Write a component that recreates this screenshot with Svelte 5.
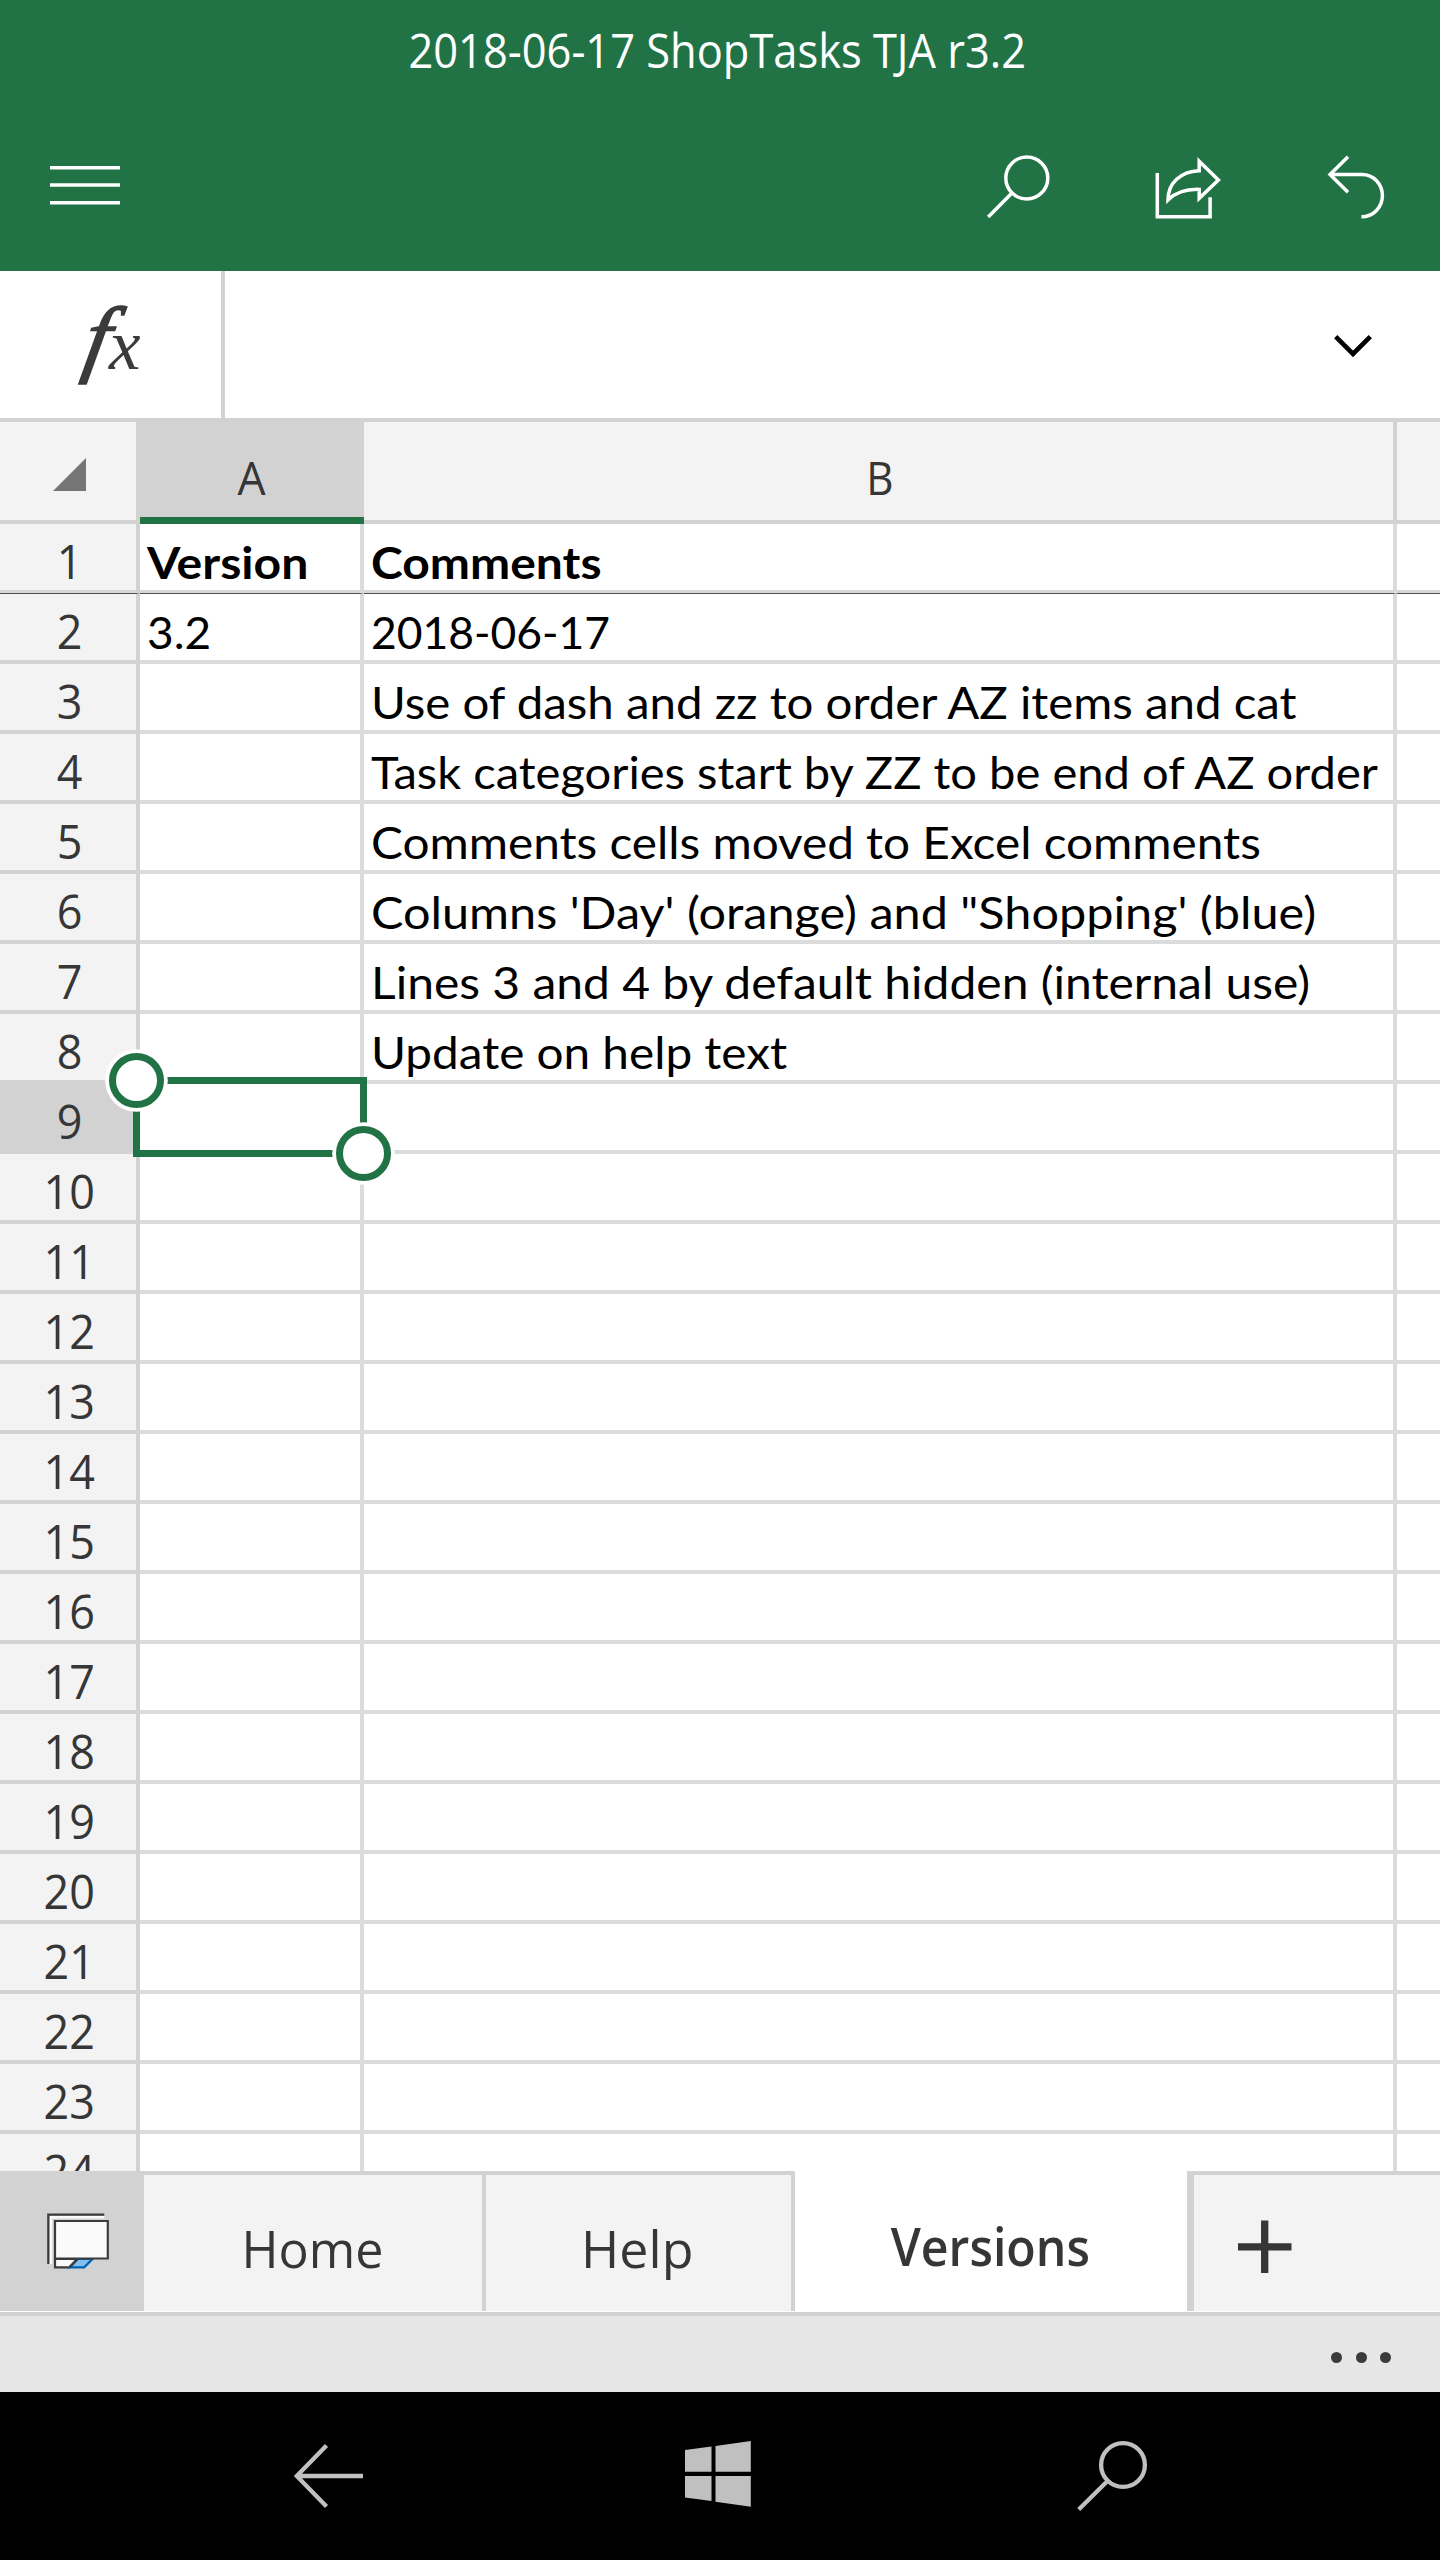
<script>
  const cells = {
    1: { a: ['Version', 160.5], b: ['Comments', 228], bold: true },
    2: { a: ['3.2', 61.5], b: ['2018-06-17', 235.5] },
    3: { b: ['Use of dash and zz to order AZ items and cat', 926] },
    4: { b: ['Task categories start by ZZ to be end of AZ order', 1010.5] },
    5: { b: ['Comments cells moved to Excel comments', 886.5] },
    6: { b: ["Columns 'Day' (orange) and \"Shopping' (blue)", 941] },
    7: { b: ['Lines 3 and 4 by default hidden (internal use)', 934] },
    8: { b: ['Update on help text', 413] }
  };
  const rows = Array.from({ length: 24 }, (_, i) => ({ n: i + 1, ...(cells[i + 1] ?? {}) }));

  // Condenses a label horizontally so that its visible ink has the given width.
  function fit(node, width) {
    const style = getComputedStyle(node);
    const ctx = document.createElement('canvas').getContext('2d');
    ctx.font = `${style.fontWeight} ${style.fontSize} ${style.fontFamily}`;
    ctx.wordSpacing = style.wordSpacing;
    const m = ctx.measureText(node.textContent);
    const ink = m.actualBoundingBoxLeft + m.actualBoundingBoxRight;
    node.style.transform = `scaleX(${width / ink})`;
  }
</script>

<div class="app">
  <header>
    <div class="title"><span use:fit={614}>2018-06-17 ShopTasks TJA r3.2</span></div>
    <div class="toolbar">
      <svg class="menu" width="70" height="80" viewBox="50 150 70 80" fill="#fff">
        <path d="M50 166h70v3.4H50zM50 183.3h70v3.5H50zM50 201h70v3.5H50z" />
      </svg>
      <svg width="80" height="80" viewBox="980 150 80 80">
        <circle cx="1026.8" cy="178" r="21" /><path d="M1011.7 193.3 988.2 217" />
      </svg>
      <svg width="80" height="80" viewBox="1150 150 80 80">
        <path d="M1157.3 173v43.7h52.8v-19.4" />
        <path d="M1199.2 161.2 1218.4 180l-19.2 18.3v-8.9c-14-.4-23.5 3-31.2 10.6 0-17 12.5-28.5 31.2-29.3z" />
      </svg>
      <svg width="80" height="80" viewBox="1320 150 80 80">
        <path d="M1348 156.8 1330 174.5l18 17.8M1330 174.5h32c11.6 0 20.4 9.5 20.4 21s-8.8 21.3-21 21.3" />
      </svg>
    </div>
  </header>

  <div class="formula">
    <div class="fx">
      <svg width="140" height="120" viewBox="40 285 140 120">
        <text transform="translate(81 366) skewX(-10) scale(1.06 1)" font-size="85" stroke="#3b3b3b" stroke-width="1.5">f</text>
        <text x="109" y="368.5" font-size="71">x</text>
      </svg>
    </div>
    <svg class="chevron" width="50" height="40" viewBox="1328 325 50 40">
      <path d="M1335.7 336.7 1353 354l17.3-17.3" />
    </svg>
  </div>

  <div class="sheet">
    <div class="cols">
      <div class="corner">
        <svg width="33" height="33" viewBox="0 0 33 33"><path d="M33 0v33H0z" fill="#767676" /></svg>
      </div>
      <div class="col a"><span use:fit={29}>A</span></div>
      <div class="col b"><span use:fit={22}>B</span></div>
      <div class="col c"></div>
    </div>
    {#each rows as row}
      <div class="row" class:frozen={row.n === 1} class:bold={row.bold} class:current={row.n === 9}>
        <div class="num"><span>{row.n}</span></div>
        <div class="cell a">{#if row.a}<span use:fit={row.a[1]}>{row.a[0]}</span>{/if}</div>
        <div class="cell b">{#if row.b}<span use:fit={row.b[1]}>{row.b[0]}</span>{/if}</div>
        <div class="cell c"></div>
      </div>
    {/each}
    <svg class="selection" width="300" height="140" viewBox="100 1045 300 140">
      <rect x="136.5" y="1080.5" width="227" height="73" fill="#fff" stroke="#217346" stroke-width="7" />
      <g fill="#fff">
        <circle cx="136.5" cy="1080.5" r="31.3" /><circle cx="363.5" cy="1153.5" r="31.3" />
        <g stroke="#217346" stroke-width="7">
          <circle cx="136.5" cy="1080.5" r="24" /><circle cx="363.5" cy="1153.5" r="24" />
        </g>
      </g>
    </svg>
  </div>

  <div class="tabs">
    <div class="sheets">
      <svg width="68" height="62" viewBox="44 2210 68 62">
        <path d="M104.3 2217.2H51V2264" fill="none" stroke="#fafafa" stroke-width="2.5" />
        <path d="M104.3 2214.7H48.3V2264" fill="none" stroke="#3b3b3b" stroke-width="2.2" />
        <path d="M55 2259v8.3h14.5l8-8.3z" fill="#fafafa" stroke="#3b3b3b" stroke-width="2.2" />
        <path d="m69.7 2267.3 8-8.3h14.8l-8.3 8.3z" fill="#83beec" stroke="#0063b1" stroke-width="2.2" />
        <path d="m69.5 2267.3 8-8.3" stroke="#3b3b3b" stroke-width="2.2" />
        <path d="M55 2221h52.8v37.5H55z" fill="#fafafa" stroke="#3b3b3b" stroke-width="2.2" />
      </svg>
    </div>
    <div class="tab home"><span use:fit={135}>Home</span></div>
    <div class="tab help"><span use:fit={104.5}>Help</span></div>
    <div class="tab active"><span use:fit={198}>Versions</span></div>
    <div class="add">
      <svg width="54" height="54" viewBox="0 0 54 54"><path d="M0 26.8h53.5M26.7 .5v52.5" stroke="#363636" stroke-width="7.3" /></svg>
    </div>
  </div>
  <div class="status"><i></i><i></i><i></i></div>

  <nav>
    <svg width="100" height="100" viewBox="280 2426 100 100">
      <path d="M326.5 2445.5 296.8 2476l29.7 30.5M297 2476h66" />
    </svg>
    <svg class="start" width="80" height="100" viewBox="680 2426 80 100">
      <path d="M685 2450l26.5-3.6v25.4H685zM715.5 2445.9l35.3-4.9v30.8h-35.3zM685 2476h26.5v25l-26.5-3.5zM715.5 2476h35.3v30.7l-35.3-5z" />
    </svg>
    <svg class="find" width="85" height="100" viewBox="1070 2426 85 100">
      <circle cx="1123" cy="2465" r="21.9" /><path d="M1107.5 2481 1078.7 2509.5" />
    </svg>
  </nav>
</div>

<style>
  :global(body) { margin: 0; background: #fff; }
  .app {
    width: 1440px;
    height: 2560px;
    overflow: hidden;
    display: flex;
    flex-direction: column;
    background: #fff;
    color: #363636;
    font-family: 'Open Sans', 'Noto Sans', sans-serif;
  }
  .app > * { box-sizing: border-box; flex: none; }
  svg { display: block; flex: none; }
  span { display: block; white-space: nowrap; transform-origin: left; }

  header { height: 271px; background: #217346; color: #fff; }
  .title {
    height: 98px;
    display: flex;
    justify-content: center;
    padding-right: 5px;
    font-size: 47px;
    line-height: 100px;
  }
  .title span { transform-origin: center; }
  .toolbar { display: flex; gap: 90px; padding: 52px 40px 0 50px; }
  .toolbar svg { fill: none; stroke: #fff; stroke-width: 3.5; }
  .toolbar .menu { fill: #fff; stroke: none; margin-right: auto; }

  .formula {
    height: 151px;
    display: flex;
    justify-content: space-between;
    border-bottom: 4px solid #d2d2d2;
  }
  .fx { box-sizing: border-box; width: 225px; padding: 14px 0 0 40px; border-right: 4px solid #d2d2d2; }
  .fx text { font-family: 'Liberation Serif', serif; font-style: italic; fill: #3b3b3b; }
  .chevron { margin: 54px 62px 0 0; fill: none; stroke: #000; stroke-width: 4.7; }

  .sheet { position: relative; height: 1749px; overflow: hidden; }
  .cols, .row { display: grid; grid-template-columns: 140px 224px 1033px 43px; }
  .cols { height: 102px; background: #f3f3f3; font-size: 46px; line-height: 110px; }
  .cols > div { box-sizing: border-box; height: 102px; border-bottom: 4px solid #d2d2d2; border-right: 4px solid #d2d2d2; }
  .cols .corner { padding: 36px 0 0 53px; }
  .col { display: flex; justify-content: center; }
  .col.b { padding-left: 3px; }
  .col span { transform-origin: center; }
  .cols .a { background: #d2d2d2; border-right: 0; border-bottom: 7px solid #217346; }
  .cols .c, .row .c { border-right: 0; }
  .row { height: 70px; }
  .row > div { box-sizing: border-box; height: 70px; border-right: 4px solid #dadbdd; border-bottom: 4px solid #dadbdd; }
  .row .num {
    display: flex;
    justify-content: center;
    padding-left: 3px;
    background: #f3f3f3;
    border-color: #d2d2d2;
    font-size: 47.5px;
    line-height: 74px;
  }
  .num span { transform: scaleX(0.945); transform-origin: center; }
  .row.current .num { background: #d2d2d2; }
  .cell { padding-left: 7px; color: #000; font-family: Lato, sans-serif; font-size: 44px; line-height: 76px; }
  .cell.b { padding-left: 6.5px; }
  .bold .cell { font-weight: 700; }
  .row.frozen > div { border-bottom: 1px solid #505050; box-shadow: inset 0 -3px #d6d7d8; }
  .selection { position: absolute; left: 100px; top: 623px; }

  .tabs { height: 141px; display: flex; font-size: 52px; background: #fff; padding-bottom: 1px; }
  .tabs > div { box-sizing: border-box; height: 140px; display: flex; justify-content: center; }
  .tabs span { transform-origin: center; }
  .tabs .sheets { width: 144px; background: #d2d2d2; justify-content: flex-start; padding: 39px 0 0 44px; }
  .tabs .tab { padding-right: 2px; }
  .tab, .add { background: #f3f3f3; border-top: 4px solid #d2d2d2; line-height: 145px; }
  .home { width: 342px; border-right: 4px solid #d2d2d2; }
  .help { width: 309px; border-right: 4px solid #d2d2d2; }
  .active { width: 392px; background: #fff; border-top-color: #fff; font-weight: 600; line-height: 141px; }
  .tabs .add { width: 253px; border-left: 7px solid #d2d2d2; justify-content: flex-start; padding: 45px 0 0 44px; }

  .status {
    height: 80px;
    display: flex;
    justify-content: flex-end;
    gap: 13.5px;
    padding: 36px 49px 0 0;
    border-top: 4px solid #d2d2d2;
    background: #e6e6e6;
  }
  .status i { width: 11px; height: 11px; border-radius: 50%; background: #3b3b39; }

  nav { height: 168px; display: flex; padding: 34px 0 0 280px; background: #000; }
  nav svg { fill: none; stroke: #c0c0c0; stroke-width: 4.3; }
  nav .start { margin-left: 300px; fill: #c0c0c0; stroke: none; }
  nav .find { margin-left: 310px; }
</style>
